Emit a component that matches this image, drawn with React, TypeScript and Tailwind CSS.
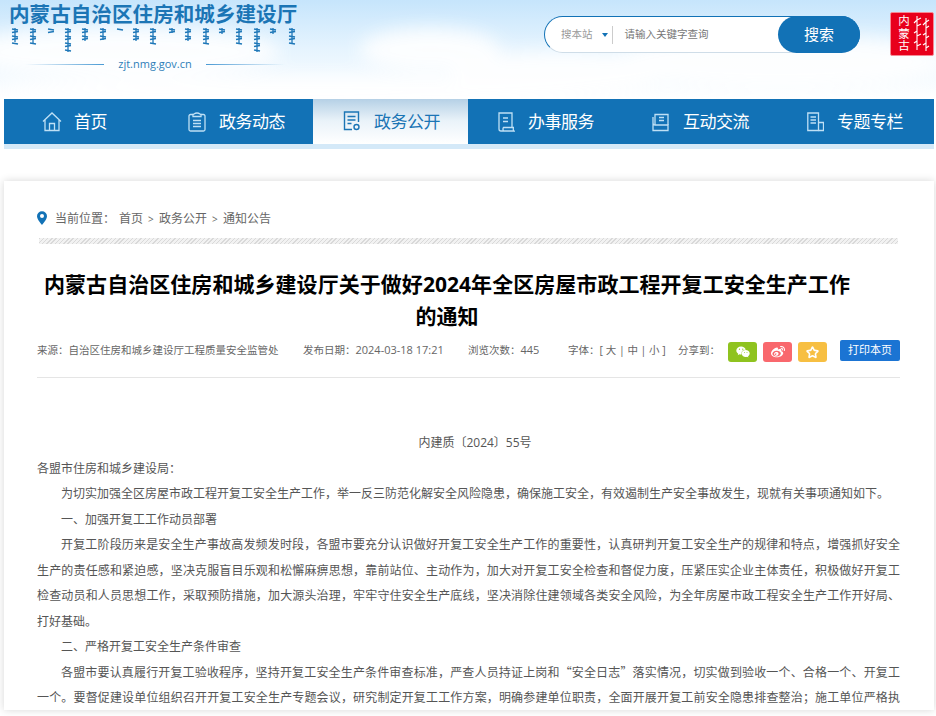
import { Star } from "lucide-react";
import { FaWeibo, FaWeixin } from "react-icons/fa";

const fontStack = "font-['Open_Sans','Noto_Sans_CJK_SC',sans-serif]";

const HomeIcon = () => (
  <svg width="20" height="20" viewBox="0 0 20 20" fill="none" stroke="currentColor" strokeWidth="1.3">
    <path d="M1 9.500 10 1l9 8.500M3 8v10.500h14V8" />
    <path d="M7.500 18.500v-7h5v7" />
  </svg>
);

const ClipboardIcon = () => (
  <svg width="18" height="20" viewBox="0 0 18 20" fill="none" stroke="currentColor" strokeWidth="1.3">
    <path d="M5 2.500H2.500A1.500 1.500 0 0 0 1 4v13.500A1.500 1.500 0 0 0 2.500 19h13a1.500 1.500 0 0 0 1.500-1.500V4a1.500 1.500 0 0 0-1.500-1.500H13" />
    <path d="M5 4.500V2.500c1-.2 1.500-1.500 4-1.500s3 1.300 4 1.500v2z" />
    <path d="M5 8.500h8M5 11.500h8M5 14.500h8" />
  </svg>
);

const DocIcon = () => (
  <svg width="18" height="20" viewBox="0 0 18 20" fill="none" stroke="currentColor" strokeWidth="1.4">
    <path d="M9 18.500H1.500V1h14v10" />
    <path d="M4.500 5.500h8M4.500 9h8M4.500 12.500h4" />
    <circle cx="13.500" cy="16" r="2.500" />
  </svg>
);

const BookIcon = () => (
  <svg width="17" height="20" viewBox="0 0 17 20" fill="none" stroke="currentColor" strokeWidth="1.3">
    <path d="M1 17V1h13v15" />
    <path d="M5 6h5M5 9.500h5" />
    <path d="M1 17c0 1 .6 2 2 2h13c-1-.6-1-3.500 0-3.500H5.500c-.8 1-.5 2.500 0 3.500" />
  </svg>
);

const TrayIcon = () => (
  <svg width="17" height="20" viewBox="0 0 17 20" fill="none" stroke="currentColor" strokeWidth="1.3">
    <path d="M3 13V2.500h13V13" />
    <path d="M7 5.500h5M7 8.500h5" />
    <path d="M1 5v13.500h15V13H3c-1 0-2-.8-2-2" />
  </svg>
);

const PagesIcon = () => (
  <svg width="17" height="20" viewBox="0 0 17 20" fill="none" stroke="currentColor" strokeWidth="1.3">
    <path d="M11.500 18.500H.8V1h10.700z" />
    <path d="M11.500 10.500h5v8h-5" />
    <path d="M3.500 5h5.500M3.500 8h5.500M3.500 11h5.500" />
  </svg>
);

const navItems = [
  { label: "首页", icon: <HomeIcon />, box: "w-[155px] pl-[38px]", gap: "gap-[12px]" },
  { label: "政务动态", icon: <ClipboardIcon />, box: "w-[154px] pl-[29px]", gap: "gap-[11px]" },
  { label: "政务公开", icon: <DocIcon />, box: "w-[155px] pl-[30px]", gap: "gap-[11px]", active: true },
  { label: "办事服务", icon: <BookIcon />, box: "w-[156px] pl-[30px]", gap: "gap-[10px]" },
  { label: "互动交流", icon: <TrayIcon />, box: "w-[155px] pl-[28px]", gap: "gap-[11px]" },
  { label: "专题专栏", icon: <PagesIcon />, box: "w-[155px] pl-[28px]", gap: "gap-[10px]" },
];

// stems of the vertical script under the logo: [x, height]
const scriptMarks = [
  [15, 14], [33, 16], [51, 4], [68, 24], [85, 13], [103, 12], [120, 2], [136, 13], [153, 15],
  [172, 5], [188, 13], [206, 15], [222, 6], [239, 16], [257, 24], [273, 6], [292, 16],
];

const ScriptLine = () => (
  <svg width="300" height="27" viewBox="0 0 300 27" fill="none" stroke="#1f78b8" strokeWidth="1.3" className="block">
    {scriptMarks.map(([x, h]) => (
      <g key={x}>
        {h > 4 && <line x1={x} y1="1" x2={x} y2={1 + h} />}
        {Array.from({ length: Math.floor(h / 3.500) + 1 }).map((_, i) => (
          <line key={i} x1={x - 3} y1={2 + i * 3.500} x2={x + 3} y2={i % 2 ? 1 + i * 3.500 : 3 + i * 3.500} />
        ))}
      </g>
    ))}
  </svg>
);

const Seal = () => (
  <div className="w-[44px] h-[44px] rounded-[2px] bg-[#e8001c] border border-[#f58a95] flex justify-between pl-[5px] pr-[3px] py-[2px] overflow-hidden">
    <span className="[writing-mode:vertical-rl] whitespace-nowrap text-[11.500px] leading-[14px] tracking-[1px] text-white">内蒙古</span>
    <svg width="17" height="38" viewBox="0 0 17 38" fill="none" stroke="#fff" strokeWidth="1.1">
      <path d="M4 1v34M4 5l4-2M4 5 1 8M4 11l4-2M4 16l-3 2M4 21l4-2M4 26l-3 2M4 31l4-2" />
      <path d="M13 3v33M13 7l3-2M13 7l-3 3M13 13l3-2M13 18l-3 2M13 23l3-2M13 28l-3 2M13 33l3-2" />
    </svg>
  </div>
);

const ShareButton = ({ color, children }: { color: string; children: React.ReactNode }) => (
  <span className={`w-[29px] h-[20px] rounded-[3px] flex items-center justify-center text-white ${color}`}>{children}</span>
);

const paragraphs = [
  "为切实加强全区房屋市政工程开复工安全生产工作，举一反三防范化解安全风险隐患，确保施工安全，有效遏制生产安全事故发生，现就有关事项通知如下。",
  "一、加强开复工工作动员部署",
  "开复工阶段历来是安全生产事故高发频发时段，各盟市要充分认识做好开复工安全生产工作的重要性，认真研判开复工安全生产的规律和特点，增强抓好安全生产的责任感和紧迫感，坚决克服盲目乐观和松懈麻痹思想，靠前站位、主动作为，加大对开复工安全检查和督促力度，压紧压实企业主体责任，积极做好开复工检查动员和人员思想工作，采取预防措施，加大源头治理，牢牢守住安全生产底线，坚决消除住建领域各类安全风险，为全年房屋市政工程安全生产工作开好局、打好基础。",
  "二、严格开复工安全生产条件审查",
  "各盟市要认真履行开复工验收程序，坚持开复工安全生产条件审查标准，严查人员持证上岗和“安全日志”落实情况，切实做到验收一个、合格一个、开复工一个。要督促建设单位组织召开开复工安全生产专题会议，研究制定开复工工作方案，明确参建单位职责，全面开展开复工前安全隐患排查整治；施工单位严格执",
];

export default function App() {
  return (
    <div className={`h-[716px] w-[936px] overflow-hidden bg-white ${fontStack}`}>
      {/* header with sky */}
      <header className="relative h-[99px] bg-gradient-to-b from-[#c6e5fc] via-[#e6f4fe] to-white overflow-hidden">
        <svg className="absolute inset-0" width="936" height="99" viewBox="0 0 936 99">
          <defs>
            <filter id="cloud" x="-30%" y="-60%" width="160%" height="220%">
              <feGaussianBlur stdDeviation="9" />
            </filter>
          </defs>
          <g fill="#fff" filter="url(#cloud)" opacity="0.9">
            <ellipse cx="120" cy="52" rx="160" ry="26" />
            <ellipse cx="430" cy="50" rx="70" ry="22" />
            <ellipse cx="560" cy="74" rx="110" ry="22" />
            <ellipse cx="780" cy="62" rx="170" ry="28" />
            <ellipse cx="300" cy="92" rx="300" ry="14" />
          </g>
        </svg>

        <div className="relative flex justify-between">
          <div className="w-[300px] pt-[1px] shrink-0">
            <h1 className="pl-[9px] text-[20.600px] leading-[26px] font-bold text-[#1b75b5] whitespace-nowrap">内蒙古自治区住房和城乡建设厅</h1>
            <ScriptLine />
            <div className="flex items-center w-[260px] ml-[25px] pt-[2px]">
              <span className="h-px flex-1 bg-gradient-to-r from-transparent to-[#4a9ad4]" />
              <span className="px-[14px] text-[11px] leading-[16px] text-[#2f7fb8]">zjt.nmg.gov.cn</span>
              <span className="h-px flex-1 bg-gradient-to-l from-transparent to-[#4a9ad4]" />
            </div>
          </div>

          <div className="flex pt-[12px] pr-[2px] gap-[30px]">
            <div className="mt-[4px] h-[37px] w-[316px] rounded-full bg-white border border-[#1272b6] border-b-[#cfdde8] flex items-center relative">
              <span className="pl-[16px] text-[10.500px] text-[#999] whitespace-nowrap">搜本站</span>
              <span className="ml-[9px] w-0 h-0 border-x-[3.500px] border-x-transparent border-t-[4px] border-t-[#1272b6]" />
              <span className="ml-[4px] h-[18px] w-px bg-[#ccc]" />
              <span className="ml-[12px] text-[10.500px] text-[#777] whitespace-nowrap">请输入关键字查询</span>
              <span className="absolute -right-px -top-px h-[37px] w-[82px] rounded-full bg-[#1272b6] text-white text-[15px] flex items-center justify-center">搜索</span>
            </div>
            <Seal />
          </div>
        </div>
      </header>

      {/* nav */}
      <div className="mx-[4px] w-[930px]">
        <nav className="flex h-[45px] bg-[#1272b6]">
          {navItems.map((item) => (
            <a
              key={item.label}
              className={`flex items-center text-[17px] tracking-[-0.5px] whitespace-nowrap ${item.box} ${item.gap} ${
                item.active
                  ? "bg-gradient-to-b from-[#b3cfe5] via-[#eaf3f9] to-white text-[#1b75b5] -mt-px"
                  : "text-white"
              }`}
            >
              <span className={`w-[20px] flex justify-start ${item.active ? "text-[#1b75b5]" : "text-[#bfe0f5]"}`}>{item.icon}</span>
              <span className="pt-[1px]">{item.label}</span>
            </a>
          ))}
        </nav>
        <div className="h-[5px] bg-[#d4e9f8]" />
      </div>

      {/* article card */}
      <main className="mt-[32px] mx-[4px] w-[930px] bg-white shadow-[0_0_8px_rgba(0,0,0,0.16)] pl-[33px] pr-[34px] pt-[30px]">
        <div className="flex items-center h-[14px] text-[12px] text-[#666] whitespace-nowrap">
          <svg width="10" height="14" viewBox="0 0 11 15" className="shrink-0">
            <path d="M5.500 0A5.500 5.500 0 0 0 0 5.500C0 9 5.500 15 5.500 15S11 9 11 5.500A5.500 5.500 0 0 0 5.500 0z" fill="#1272b6" />
            <circle cx="5.500" cy="5.300" r="2.200" fill="#fff" />
          </svg>
          <span className="flex items-center pt-[2px]">
            <span className="ml-[8px]">当前位置：</span>
            <span className="ml-[4px]">首页</span>
            <span className="mx-[5px] w-[6px] text-[10px]">&gt;</span>
            <span>政务公开</span>
            <span className="mx-[5px] w-[6px] text-[10px]">&gt;</span>
            <span>通知公告</span>
          </span>
        </div>

        <div className="mt-[13px] ml-[2px] mr-[2px] h-[6px] bg-[repeating-linear-gradient(135deg,#d9d9d9_0,#d9d9d9_1px,#f2f2f2_1px,#f2f2f2_3px)]" />

        <h2 className="mt-[24px] w-[820px] text-center text-[21px] leading-[32px] font-bold tracking-[0.05px] text-black">
          内蒙古自治区住房和城乡建设厅关于做好2024年全区房屋市政工程开复工安全生产工作的通知
        </h2>

        <div className="mt-[8px] h-[29px] flex items-start text-[10.500px] leading-[20px] text-[#666] whitespace-nowrap">
          <span className="w-[266px]">来源：自治区住房和城乡建设厅工程质量安全监管处</span>
          <span className="w-[165px]">发布日期：<span className="text-[11px]">2024-03-18 17:21</span></span>
          <span className="w-[100px]">浏览次数：<span className="text-[11px]">445</span></span>
          <span className="w-[110px]">字体：[ 大 | 中 | 小 ]</span>
          <span className="w-[50px]">分享到：</span>
          <span className="mt-[2px] flex gap-[6px]">
            <ShareButton color="bg-[#8fc31f]"><FaWeixin size={14} /></ShareButton>
            <ShareButton color="bg-[#f9686d]"><FaWeibo size={14} /></ShareButton>
            <ShareButton color="bg-[#f7bf42]"><Star size={13} strokeWidth={3} /></ShareButton>
          </span>
          <span className="ml-[13px] w-[60px] h-[21px] rounded-[2px] bg-[#1b74d3] text-white text-center text-[11px] leading-[20px]">打印本页</span>
        </div>
        <div className="mt-[8px] h-px bg-[#e5e5e5]" />

        <article className="mt-[51px] text-[12px] leading-[25.500px] text-[#555] text-justify">
          <p className="pt-[1px] h-[25.500px] pl-[13px] text-center">内建质〔2024〕55号</p>
          <p className="font-['Noto_Sans_CJK_SC',sans-serif]">各盟市住房和城乡建设局：</p>
          {paragraphs.map((text) => (
            <p key={text} className="indent-[24px] font-['Noto_Sans_CJK_SC',sans-serif] last:[text-align-last:justify]">{text}</p>
          ))}
        </article>
      </main>
    </div>
  );
}
